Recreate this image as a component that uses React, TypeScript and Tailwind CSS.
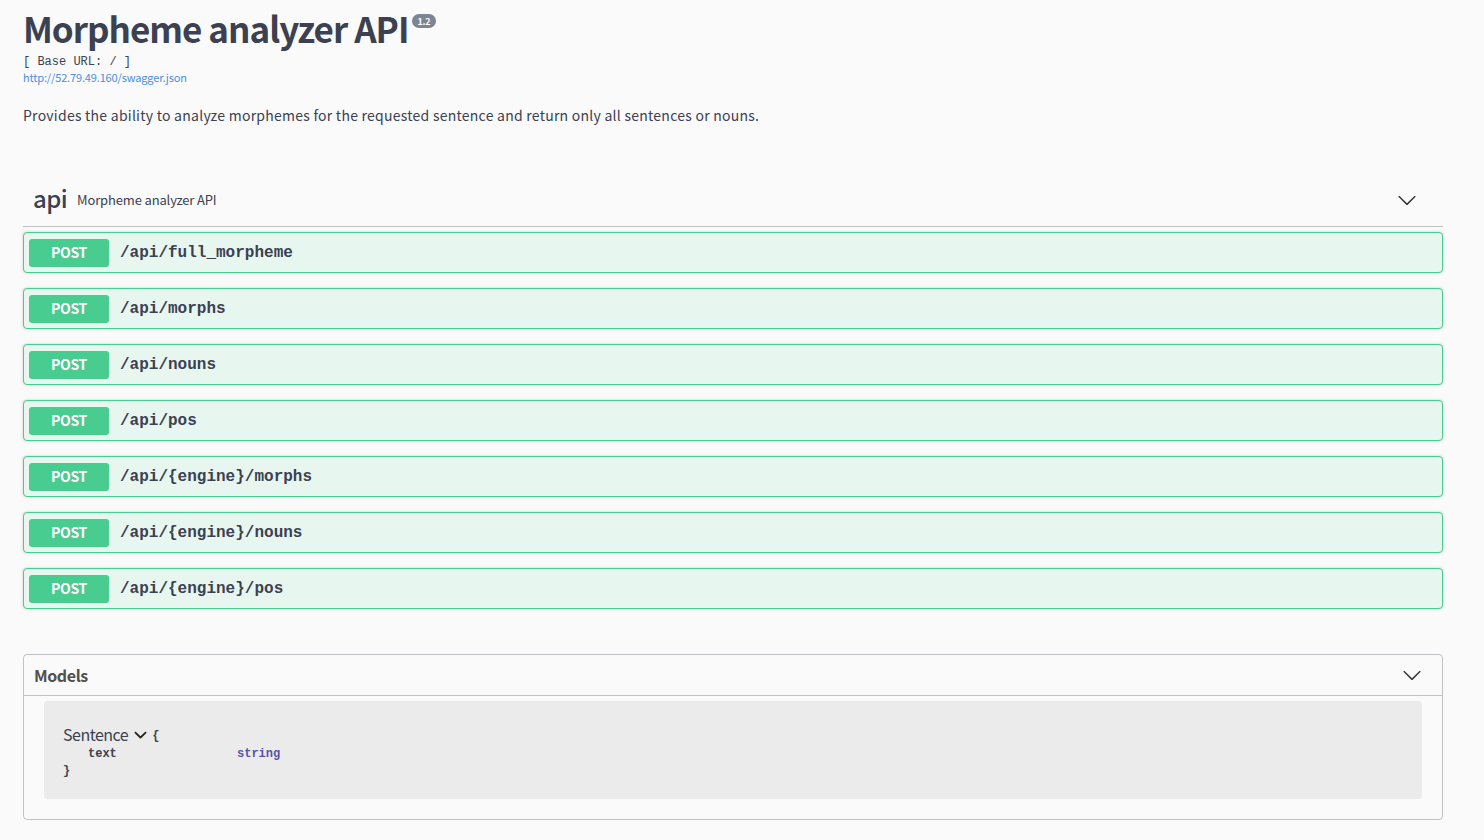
import React from 'react';

const ops = [
  '/api/full_morpheme',
  '/api/morphs',
  '/api/nouns',
  '/api/pos',
  '/api/{engine}/morphs',
  '/api/{engine}/nouns',
  '/api/{engine}/pos',
];

const sans = { fontFamily: '"Noto Sans CJK KR", "Noto Sans", sans-serif' };
const mono = { fontFamily: '"Liberation Mono", "DejaVu Sans Mono", monospace' };

function Chevron({ className }: { className?: string }) {
  return (
    <svg viewBox="0 0 20 20" className={className} fill="currentColor">
      <path d="M17.418 6.109c.272-.268.709-.268.979 0s.271.701 0 .969l-7.908 7.83c-.27.268-.707.268-.979 0l-7.908-7.830c-.27-.268-.27-.701 0-.969.271-.268.709-.268.979 0L10 13.25l7.418-7.141z" />
    </svg>
  );
}

export default function App() {
  return (
    <div className="min-h-[840px] bg-[#fafafa] text-[#3b4151]" style={sans}>
      <div className="px-[23px] w-[1466px]">
        {/* Info */}
        <div className="pt-[5px]">
          <div className="flex items-start">
            <h2 className="text-[35px] font-bold leading-[46px] tracking-[-1px] text-[#3b4151]">Morpheme analyzer API</h2>
            <span className="ml-[3px] mt-[9px] rounded-[7px] bg-[#7d8492] px-[6px] h-[14px] flex items-center text-[9px] font-bold text-white leading-none tracking-[-0.3px]">1.2</span>
          </div>
          <div className="mt-[4px] text-[12px] leading-[15px] text-[#3b4151]" style={mono}>[ Base URL: / ]</div>
          <a className="block text-[11px] leading-[15px] tracking-[-0.15px] text-[#4990e2]">http://52.79.49.160/swagger.json</a>
          <p className="mt-[20px] text-[14px] leading-[20px] tracking-[0.25px]">
            Provides the ability to analyze morphemes for the requested sentence and return only all sentences or nouns.
          </p>
        </div>

        {/* Tag */}
        <div className="mt-[52px] flex items-center h-[50px] border-b border-[#3b4151]/30 pl-[10px] pr-[26px] pb-[4px]">
          <span className="text-[24px] font-medium leading-none pb-[3px] tracking-[-0.6px]">api</span>
          <span className="ml-[10px] text-[13px] tracking-[-0.15px]">Morpheme analyzer API</span>
          <Chevron className="ml-auto w-[20px] h-[20px] text-[#333]" />
        </div>

        <div className="mt-[5px] flex flex-col gap-[15px]">
          {ops.map((p) => (
            <div
              key={p}
              className="flex items-center h-[41px] rounded-[4px] border border-[#49cc90] bg-[#e8f6f0] px-[5px]"
              style={{ boxShadow: '0 0 3px rgba(0,0,0,.19)' }}
            >
              <span className="flex items-center justify-center w-[80px] h-[28px] rounded-[3px] bg-[#49cc90] text-white text-[14px] font-bold tracking-[-0.3px]">
                POST
              </span>
              <span className="ml-[11px] text-[16px] font-bold text-[#3b4151]" style={mono}>
                {p}
              </span>
            </div>
          ))}
        </div>

        {/* Models */}
        <div className="mt-[45px] rounded-[4px] border border-[#3b4151]/30 pb-[20px]">
          <div className="flex items-center h-[41px] border-b border-[#3b4151]/30 pl-[10px] pr-[20px]">
            <span className="text-[16px] font-semibold tracking-[-0.4px] text-[#505050]">Models</span>
            <Chevron className="ml-auto w-[20px] h-[20px] text-[#333]" />
          </div>
          <div className="mx-[20px] mt-[5px] rounded-[4px] bg-[#ebebeb] px-[19px] pt-[21px] pb-[19px]">
            <div className="flex items-center">
              <span className="text-[16px] tracking-[-0.5px] text-[#3b4151]">Sentence</span>
              <svg viewBox="0 0 20 20" className="ml-[6px] mt-[3px] w-[13px] h-[13px]" fill="#222">
                <path d="M13.418 7.859c.271-.268.709-.268.978 0 .27.268.272.701 0 .969l-3.908 3.83c-.27.268-.707.268-.979 0l-3.908-3.83c-.27-.267-.27-.701 0-.969.271-.268.709-.268.978 0L10 11l3.418-3.141z" transform="translate(-10 -11) scale(2)" />
              </svg>
              <span className="ml-[5px] mt-[4px] text-[12px] font-bold" style={mono}>{'{'}</span>
            </div>
            <div className="flex text-[12px] font-bold leading-[16px]" style={mono}>
              <span className="pl-[25px] w-[174px]">text</span>
              <span className="text-[#55a]">string</span>
            </div>
            <div className="text-[12px] font-bold leading-[18px]" style={mono}>{'}'}</div>
          </div>
        </div>
      </div>
    </div>
  );
}
